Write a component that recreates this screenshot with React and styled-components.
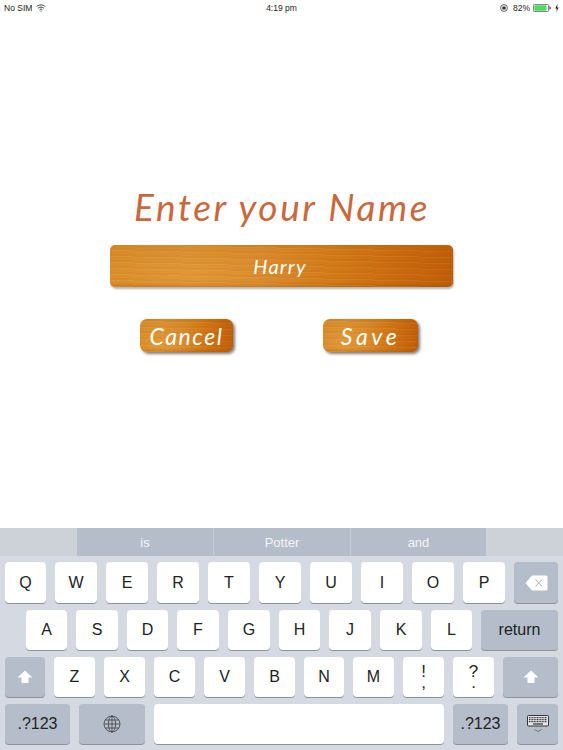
import React from 'react'
import styled, { createGlobalStyle } from 'styled-components'

const GlobalStyle = createGlobalStyle`
  html, body {
    margin: 0;
    padding: 0;
    background: #fff;
  }
  * {
    box-sizing: border-box;
  }
`

const Screen = styled.div`
  width: 563px;
  height: 750px;
  display: flex;
  flex-direction: column;
  overflow: hidden;
  font-family: "Liberation Sans", Arial, sans-serif;
`

const StatusBar = styled.div`
  height: 15px;
  padding: 1px 4px 0 4px;
  display: grid;
  grid-template-columns: 1fr auto 1fr;
  align-items: center;
  font-size: 8.5px;
  color: #222;
`

const StatusSide = styled.div`
  display: flex;
  align-items: center;
  gap: ${props => props.gap || 4}px;
  justify-content: ${props => (props.right ? 'flex-end' : 'flex-start')};
`

const Form = styled.div`
  flex: 1;
  display: flex;
  flex-direction: column;
  align-items: flex-start;
  padding-top: 172px;
`

const Title = styled.h1`
  margin: 0 0 0 134px;
  height: 39px;
  line-height: 39px;
  font-family: "Lato", sans-serif;
  font-style: italic;
  font-weight: 400;
  font-size: 37px;
  letter-spacing: 2.6px;
  white-space: nowrap;
  color: #c8683c;
`

const wood = `
  background-color: #cf7a17;
  background-image:
    repeating-linear-gradient(1.2deg, rgba(255,225,160,0.07) 0 1px, rgba(130,65,0,0.05) 1px 3px, rgba(255,225,160,0) 3px 6px),
    radial-gradient(ellipse 40% 60% at 22% 70%, rgba(245,180,80,0.22), rgba(245,180,80,0)),
    linear-gradient(180deg, rgba(150,80,0,0.12) 0%, rgba(150,80,0,0) 12%, rgba(150,80,0,0) 88%, rgba(120,60,0,0.18) 100%),
    linear-gradient(90deg, #d78a28 0%, #da9030 22%, #d8882a 45%, #d27a18 65%, #c9690e 85%, #bf5e08 100%);
`

const NameField = styled.div`
  ${wood}
  margin: 19px 0 0 110px;
  width: 343px;
  height: 42px;
  border-radius: 5px;
  box-shadow: 1px 2px 2px rgba(90, 70, 50, 0.4);
  display: flex;
  align-items: center;
  justify-content: center;
  padding-right: 3px;
  font-family: "Lato", sans-serif;
  font-style: italic;
  font-size: 20px;
  letter-spacing: 1.2px;
  color: #fff;
`

const Actions = styled.div`
  margin: 32px 0 0 140px;
  display: flex;
  gap: 90px;
`

const WoodButton = styled.div`
  ${wood}
  width: ${props => props.width}px;
  height: 33px;
  border-radius: 7px;
  box-shadow: 2px 2px 3px rgba(50, 40, 30, 0.6);
  display: flex;
  align-items: center;
  justify-content: center;
  font-family: "Lato", sans-serif;
  font-style: italic;
  font-size: 23px;
  letter-spacing: ${props => props.spacing}px;
  color: #fff;
`

const Keyboard = styled.div`
  height: 222px;
  background: #d5d9e1;
  display: flex;
  flex-direction: column;
`

const SuggestionBar = styled.div`
  height: 28px;
  background: #cdd1d8;
  padding-left: 77px;
  display: flex;
  margin-bottom: 6px;
`

const Suggestion = styled.div`
  width: ${props => props.width}px;
  background: #b5bdcb;
  border-right: ${props => (props.last ? 'none' : '1px solid #c6ccd7')};
  display: flex;
  align-items: center;
  justify-content: center;
  font-size: 13px;
  color: #f4f5f8;
`

const KeyRows = styled.div`
  display: flex;
  flex-direction: column;
  gap: 7px;
`

const KeyRow = styled.div`
  display: flex;
  height: ${props => props.height}px;
  padding-left: ${props => props.inset}px;
  gap: ${props => props.gap}px;
`

const Key = styled.div`
  width: ${props => props.width}px;
  height: 100%;
  border-radius: 4px;
  background: ${props => (props.dark ? '#b5bdcb' : '#fff')};
  box-shadow: 0 1px 0 #8e929a;
  display: flex;
  flex-direction: column;
  align-items: center;
  justify-content: center;
  font-size: 16px;
  color: #222;
`

const Glyph = styled.span`
  display: block;
  height: 11px;
  line-height: 11px;
  font-size: 17px;
`

const WifiIcon = () => (
  <svg width="10" height="8" viewBox="0 0 10 8" fill="none" stroke="#222" strokeWidth="0.9">
    <path d="M0.6 2.6C3 0.4 7 0.4 9.4 2.6" />
    <path d="M2.1 4.2C3.7 2.8 6.3 2.8 7.9 4.2" />
    <path d="M3.6 5.7C4.4 5 5.6 5 6.4 5.7" />
    <circle cx="5" cy="7" r="0.6" fill="#222" stroke="none" />
  </svg>
)

const LockIcon = () => (
  <svg width="8" height="8" viewBox="0 0 8 8">
    <circle cx="4" cy="4" r="3.4" fill="none" stroke="#333" strokeWidth="0.8" />
    <rect x="2.4" y="2.5" width="3.2" height="3" rx="0.5" fill="#333" />
  </svg>
)

const BatteryIcon = () => (
  <svg width="19" height="8" viewBox="0 0 19 8">
    <rect x="0.4" y="0.4" width="15.2" height="7.2" rx="1.2" fill="none" stroke="#444" strokeWidth="0.7" />
    <rect x="1.3" y="1.3" width="12.2" height="5.4" rx="0.6" fill="#4cd964" />
    <path d="M16.4 2.6c1 0 1.4.6 1.4 1.4s-.4 1.4-1.4 1.4z" fill="#444" />
  </svg>
)

const ChargeIcon = () => (
  <svg width="4" height="8" viewBox="0 0 4 8">
    <path d="M2.4 0L0.3 4.4H1.8L1.4 8L3.7 3.4H2.2z" fill="#222" />
  </svg>
)

const ShiftIcon = () => (
  <svg width="16" height="14" viewBox="0 0 16 14">
    <path d="M8 0.5L15.5 7.5H11.5V13H4.5V7.5H0.5z" fill="#fff" />
  </svg>
)

const DeleteIcon = () => (
  <svg width="23" height="16" viewBox="0 0 23 16">
    <path d="M7 0.5H21a1.5 1.5 0 0 1 1.5 1.5V14a1.5 1.5 0 0 1-1.5 1.5H7L0.5 8z" fill="#fff" />
    <path d="M10.5 4.5L17 11.5M17 4.5L10.5 11.5" stroke="#a9b1bf" strokeWidth="1" />
  </svg>
)

const GlobeIcon = () => (
  <svg width="18" height="18" viewBox="0 0 18 18" fill="none" stroke="#333" strokeWidth="0.7">
    <circle cx="9" cy="9" r="8" />
    <ellipse cx="9" cy="9" rx="3.6" ry="8" />
    <path d="M9 1V17M1 9H17M2.2 5H15.8M2.2 13H15.8" />
  </svg>
)

const KeyboardIcon = () => (
  <svg width="22" height="18" viewBox="0 0 22 18" fill="none">
    <rect x="0.5" y="0.5" width="21" height="10.5" rx="1" fill="#e4e6ea" stroke="#222" strokeWidth="0.9" />
    <path d="M2 2.7H20M2 4.7H20M2 6.7H20" stroke="#333" strokeWidth="1.2" strokeDasharray="1 0.6" />
    <path d="M6 9H16" stroke="#333" strokeWidth="1.2" />
    <path d="M7.5 14.5L11 16.5L14.5 14.5" stroke="#555" strokeWidth="0.7" />
  </svg>
)

const topRow = [
  ['Q', 41], ['W', 42], ['E', 42], ['R', 42], ['T', 42],
  ['Y', 42], ['U', 42], ['I', 42], ['O', 42], ['P', 42]
]
const homeRow = [
  ['A', 41], ['S', 42], ['D', 41], ['F', 42], ['G', 42],
  ['H', 41], ['J', 42], ['K', 42], ['L', 41]
]
const bottomRow = [
  ['Z', 41], ['X', 41], ['C', 41], ['V', 41], ['B', 41], ['N', 40], ['M', 41]
]

const App = () => {
  return (
    <Screen>
      <GlobalStyle />
      <StatusBar>
        <StatusSide>
          <span>No SIM</span>
          <WifiIcon />
        </StatusSide>
        <span>4:19 pm</span>
        <StatusSide right gap={3}>
          <LockIcon />
          <span>&nbsp;82%</span>
          <BatteryIcon />
          <ChargeIcon />
        </StatusSide>
      </StatusBar>

      <Form>
        <Title>Enter your Name</Title>
        <NameField>Harry</NameField>
        <Actions>
          <WoodButton width={93} spacing={1.6}>Cancel</WoodButton>
          <WoodButton width={95} spacing={3.6}>Save</WoodButton>
        </Actions>
      </Form>

      <Keyboard>
        <SuggestionBar>
          <Suggestion width={137}>is</Suggestion>
          <Suggestion width={137}>Potter</Suggestion>
          <Suggestion width={135} last>and</Suggestion>
        </SuggestionBar>
        <KeyRows>
          <KeyRow height={41} inset={5} gap={9}>
            {topRow.map(([label, width]) => (
              <Key key={label} width={width}>{label}</Key>
            ))}
            <Key dark width={44}><DeleteIcon /></Key>
          </KeyRow>
          <KeyRow height={40} inset={26} gap={9}>
            {homeRow.map(([label, width]) => (
              <Key key={label} width={width}>{label}</Key>
            ))}
            <Key dark width={77}>return</Key>
          </KeyRow>
          <KeyRow height={40} inset={5} gap={9}>
            <Key dark width={40}><ShiftIcon /></Key>
            {bottomRow.map(([label, width]) => (
              <Key key={label} width={width}>{label}</Key>
            ))}
            <Key width={41}><Glyph>!</Glyph><Glyph>,</Glyph></Key>
            <Key width={41}><Glyph>?</Glyph><Glyph>.</Glyph></Key>
            <Key dark width={55}><ShiftIcon /></Key>
          </KeyRow>
          <KeyRow height={40} inset={5} gap={9}>
            <Key dark width={65}>.?123</Key>
            <Key dark width={66}><GlobeIcon /></Key>
            <Key width={290} />
            <Key dark width={55}>.?123</Key>
            <Key dark width={41}><KeyboardIcon /></Key>
          </KeyRow>
        </KeyRows>
      </Keyboard>
    </Screen>
  )
}

export default App
